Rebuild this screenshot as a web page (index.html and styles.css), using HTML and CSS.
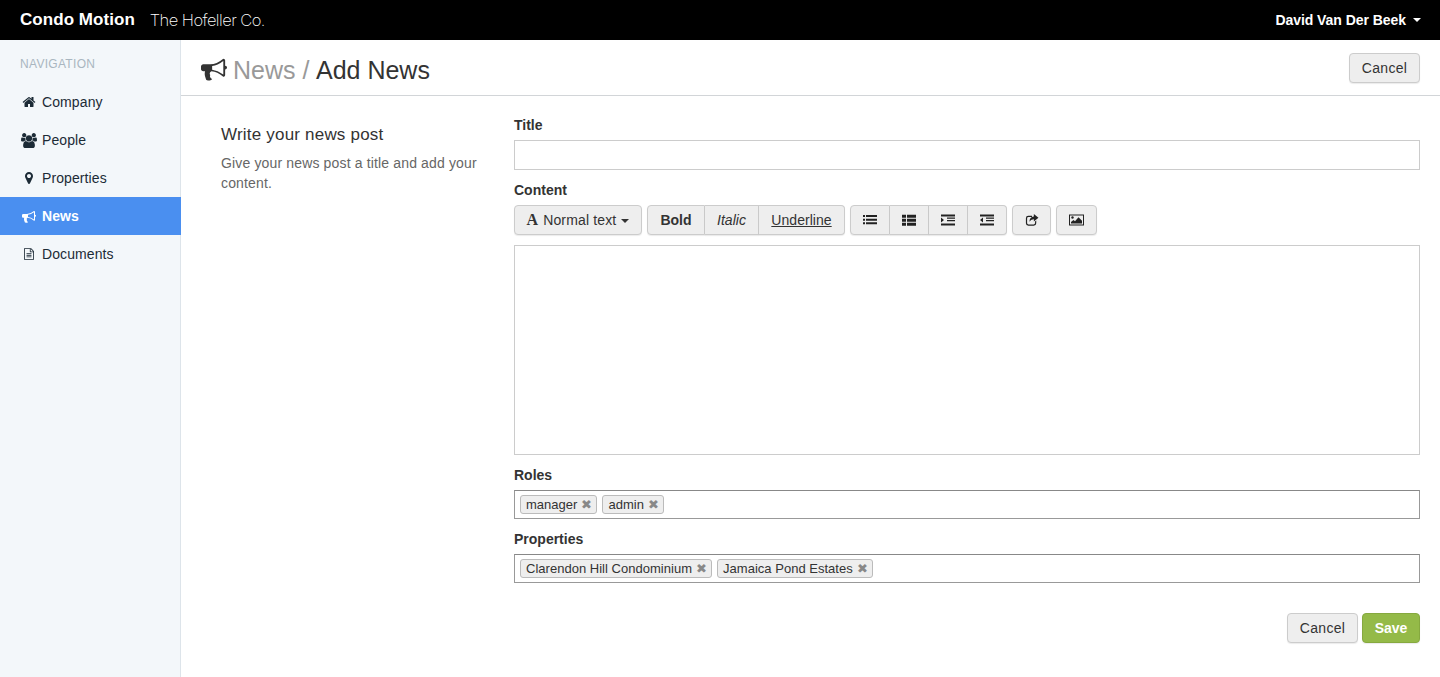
FILE: index.html
```html
<!DOCTYPE html>
<html lang="en">
<head>
<meta charset="utf-8">
<title>Add News</title>
<link rel="stylesheet" href="styles.css">
</head>
<body>
<svg class="defs" width="0" height="0" aria-hidden="true">
  <symbol id="i-home" viewBox="0 0 1792 1792"><path d="M1472 992v480q0 26-19 45t-45 19h-384v-384H768v384H384q-26 0-45-19t-19-45V992q0-1 .5-3t.5-3l575-474 575 474q1 2 1 6zm223-69l-62 74q-8 9-21 11h-3q-13 0-21-7L896 424l-692 577q-12 8-24 7-13-2-21-11l-62-74q-8-10-7-23.500t11-21.500l719-599q32-26 76-26t76 26l244 204V288q0-14 9-23t23-9h192q14 0 23 9t9 23v408l219 182q10 8 11 21.500t-7 23.500z"/></symbol>
  <symbol id="i-users" viewBox="0 0 1920 1792"><path d="M593 896q-162 5-265 128H194q-82 0-138-40.500T0 865q0-353 124-353 6 0 43.500 21t97.500 42.500T384 597q67 0 133-23-5 37-5 66 0 139 81 256zm1071 637q0 120-73 189.500t-194 69.500H523q-121 0-194-69.500T256 1533q0-53 3.500-103.500t14-109T300 1212t43-97.500 62-81 85.500-53.500T602 960q10 0 43 21.500t73 48 107 48 135 21.500 135-21.500 107-48 73-48 43-21.500q61 0 111.500 20t85.500 53.500 62 81 43 97.500 26.500 108.500 14 109 3.500 103.500zM640 256q0 106-75 181t-181 75-181-75-75-181 75-181 181-75 181 75 75 181zm704 384q0 159-112.500 271.500T960 1024 688.500 911.500 576 640t112.500-271.500T960 256t271.500 112.500T1344 640zm576 225q0 78-56 118.500t-138 40.500h-134q-103-123-265-128 81-117 81-256 0-29-5-66 66 23 133 23 59 0 119-21.500t97.500-42.500 43.500-21q124 0 124 353zm-128-609q0 106-75 181t-181 75-181-75-75-181 75-181 181-75 181 75 75 181z"/></symbol>
  <symbol id="i-marker" viewBox="0 0 1024 1792"><path d="M768 640q0-106-75-181t-181-75-181 75-75 181 75 181 181 75 181-75 75-181zm256 0q0 109-33 179l-364 774q-16 33-47.500 52t-67.500 19-67.500-19-46.500-52L33 819Q0 749 0 640q0-212 150-362t362-150 362 150 150 362z"/></symbol>
  <symbol id="i-horn" viewBox="0 0 1792 1792"><path d="M1664 736q53 0 90.500 37.500T1792 864t-37.500 90.500T1664 992v384q0 52-38 90t-90 38q-417-347-812-380-58 19-91 66t-31 100.500 40 92.500q-20 33-23 65.500t6 58 33.500 55 48 50 61.500 50.500q-29 58-111.500 83t-168.500 11.500-132-55.500q-7-23-29.500-87.500t-32-94.500-23-89-15-101 3.500-98.500 22-110.500H160q-66 0-113-47t-47-113V800q0-66 47-113t113-47h480q435 0 896-384 52 0 90 38t38 90v384zm-128 604V407q-394 302-768 343v270q377 42 768 320z"/></symbol>
  <symbol id="i-file" viewBox="128 0 1536 1792"><path d="M1596 380q28 28 48 76t20 88v1152q0 40-28 68t-68 28H224q-40 0-68-28t-28-68V96q0-40 28-68t68-28h896q40 0 88 20t76 48zm-444-244v376h376q-10-29-22-41l-313-313q-12-12-41-22zm384 1528V640H1120q-40 0-68-28t-28-68V128H256v1536h1280zM512 800q0-14 9-23t23-9h704q14 0 23 9t9 23v64q0 14-9 23t-23 9H544q-14 0-23-9t-9-23v-64zm736 224q14 0 23 9t9 23v64q0 14-9 23t-23 9H544q-14 0-23-9t-9-23v-64q0-14 9-23t23-9h704zm0 256q14 0 23 9t9 23v64q0 14-9 23t-23 9H544q-14 0-23-9t-9-23v-64q0-14 9-23t23-9h704z"/></symbol>
  <symbol id="i-ul" viewBox="0 0 14 12"><path d="M0 1h2v2H0zM3 1h11v2H3zM0 4.700h2v2H0zM3 4.700h11v2H3zM0 8.300h2v2H0zM3 8.300h11v2H3z"/></symbol>
  <symbol id="i-ol" viewBox="0 0 14 12"><path d="M0 .8h4v3H0zM5 .8h9v3H5zM0 4.800h4v3H0zM5 4.800h9v3H5zM0 8.800h4v3H0zM5 8.800h9v3H5z"/></symbol>
  <symbol id="i-indent" viewBox="0 0 14 12"><path d="M0 .5h14v2H0zM6 3.500h8v1.300H6zM6 6h8v1.300H6zM0 9.500h14v2H0zM0 3.500l3 2.500-3 2.500z"/></symbol>
  <symbol id="i-outdent" viewBox="0 0 14 12"><path d="M0 .5h14v2H0zM6 3.500h8v1.300H6zM6 6h8v1.300H6zM0 9.500h14v2H0zM3 3.500L0 6l3 2.500z"/></symbol>
  <symbol id="i-share" viewBox="0 0 14 13"><path d="M3 2h4v1.300H3.200Q1.700 3.300 1.700 4.800v5q0 1.500 1.500 1.500h5.600q1.500 0 1.500-1.500V8l1.300-1v3q0 2.700-2.700 2.700H3Q.4 12.700.4 10V4.700Q.4 2 3 2z"/><path d="M9 0l5 4-5 4V5.600Q5.500 5.400 4.300 8.500 4 3.200 9 2.600z"/></symbol>
  <symbol id="i-picture" viewBox="0 0 15 12"><path fill-rule="evenodd" d="M0 .5h15v11H0zM1 1.500v9h13v-9z"/><path d="M2 9.500v-1.500l2.500-2 1.500 1.200 3.500-4 3.500 3.500v2.800z"/><circle cx="3.500" cy="3.500" r="1.200"/></symbol>
</svg>

<header class="topbar">
  <div class="brand">
    <span class="brand-name">Condo Motion</span>
    <span class="brand-client">The Hofeller Co.</span>
  </div>
  <div class="user">David Van Der Beek <span class="caret caret-user"></span></div>
</header>

<div class="shell">
  <nav class="sidebar">
    <div class="nav-label">NAVIGATION</div>
    <a class="nav-item"><span class="nav-icon"><svg class="ic-home"><use href="#i-home"/></svg></span>Company</a>
    <a class="nav-item"><span class="nav-icon"><svg class="ic-users"><use href="#i-users"/></svg></span>People</a>
    <a class="nav-item"><span class="nav-icon"><svg class="ic-marker"><use href="#i-marker"/></svg></span>Properties</a>
    <a class="nav-item active"><span class="nav-icon"><svg class="ic-home"><use href="#i-horn"/></svg></span>News</a>
    <a class="nav-item"><span class="nav-icon"><svg class="ic-file"><use href="#i-file"/></svg></span>Documents</a>
  </nav>

  <main class="main">
    <div class="page-head">
      <h1 class="page-title"><svg class="ic-title"><use href="#i-horn"/></svg><span class="crumb">News /</span> Add News</h1>
      <button class="btn btn-cancel" type="button">Cancel</button>
    </div>

    <div class="columns">
      <aside class="intro">
        <h2 class="intro-title">Write your news post</h2>
        <p class="intro-text">Give your news post a title and add your content.</p>
      </aside>

      <form class="form">
        <label class="field-label">Title</label>
        <div class="input"></div>

        <label class="field-label label-content">Content</label>
        <div class="toolbar">
          <div class="group"><button class="btn tool tool-style" type="button"><span class="font-a">A</span> Normal text <span class="caret caret-dark"></span></button></div>
          <div class="group">
            <button class="btn tool tool-bold" type="button">Bold</button>
            <button class="btn tool tool-italic" type="button">Italic</button>
            <button class="btn tool tool-under" type="button">Underline</button>
          </div>
          <div class="group">
            <button class="btn tool tool-icon tool-lead" type="button"><svg class="ic-tool"><use href="#i-ul"/></svg></button>
            <button class="btn tool tool-icon" type="button"><svg class="ic-tool"><use href="#i-ol"/></svg></button>
            <button class="btn tool tool-icon" type="button"><svg class="ic-tool"><use href="#i-indent"/></svg></button>
            <button class="btn tool tool-icon" type="button"><svg class="ic-tool"><use href="#i-outdent"/></svg></button>
          </div>
          <div class="group"><button class="btn tool tool-icon" type="button"><svg class="ic-tool"><use href="#i-share"/></svg></button></div>
          <div class="group"><button class="btn tool tool-pic" type="button"><svg class="ic-pic"><use href="#i-picture"/></svg></button></div>
        </div>
        <div class="editor"></div>

        <label class="field-label label-roles">Roles</label>
        <div class="tags">
          <span class="tag">manager<span class="tag-x">✖</span></span>
          <span class="tag">admin<span class="tag-x">✖</span></span>
        </div>

        <label class="field-label label-props">Properties</label>
        <div class="tags">
          <span class="tag">Clarendon Hill Condominium<span class="tag-x">✖</span></span>
          <span class="tag">Jamaica Pond Estates<span class="tag-x">✖</span></span>
        </div>

        <div class="actions">
          <button class="btn btn-cancel" type="button">Cancel</button>
          <button class="btn btn-save" type="button">Save</button>
        </div>
      </form>
    </div>
  </main>
</div>
</body>
</html>
```

FILE: styles.css
```css
* { box-sizing: border-box; }
html, body { margin: 0; height: 677px; overflow: hidden; }
body { font-family: "Liberation Sans", Arial, sans-serif; font-size: 14px; line-height: 20px; color: #333; background: #fff; }
.defs { display: block; height: 0; }

.topbar { height: 40px; background: #000; color: #fff; display: flex; align-items: center; justify-content: space-between; padding: 0 19px 0 20px; }
.brand { display: flex; align-items: center; }
.brand-name { font-size: 17px; font-weight: 700; letter-spacing: 0.05px; }
.brand-client { margin-left: 15px; font-family: Inter, sans-serif; font-weight: 200; font-size: 16.5px; letter-spacing: -0.55px; }
.user { font-size: 14px; font-weight: 700; letter-spacing: -0.05px; display: flex; align-items: center; }
.caret { display: inline-block; width: 0; height: 0; border-left: 4px solid transparent; border-right: 4px solid transparent; }
.caret-user { border-top: 4px solid #fff; margin-left: 7px; }
.caret-dark { border-top: 4px solid #333; margin-left: 1px; vertical-align: 2px; }

.shell { display: flex; height: 637px; }
.sidebar { width: 181px; flex: none; background: #f3f7fa; border-right: 1px solid #dde4ea; padding-top: 15px; color: #1c2b36; }
.nav-label { height: 28px; padding-left: 20px; font-size: 12px; line-height: 18px; color: #a9b6c0; letter-spacing: 0.3px; }
.nav-item { display: flex; align-items: center; height: 38px; color: #1c2b36; letter-spacing: 0.1px; margin-right: -1px; }
.nav-item.active { background: #4a8ff0; color: #fff; font-weight: 700; }
.nav-icon { width: 42px; flex: none; display: flex; justify-content: center; padding-left: 15px; fill: currentColor; }
.nav-icon svg { display: block; }
.ic-home { width: 14px; height: 14px; }
.ic-users { width: 16px; height: 15px; }
.ic-marker { width: 8px; height: 14px; }
.ic-file { width: 10px; height: 12px; }

.main { flex: 1; min-width: 0; }
.page-head { height: 56px; border-bottom: 1px solid #d2d5d8; display: flex; align-items: center; justify-content: space-between; padding: 0 20px; }
.page-title { margin: 0; font-size: 25px; font-weight: 400; line-height: 30px; color: #333; display: flex; align-items: center; padding-top: 4px; white-space: pre; }
.ic-title { width: 26px; height: 26px; fill: #333; margin-right: 6px; margin-top: -3px; }
.crumb { color: #999; margin-right: 1px; }

.btn { font-family: inherit; font-size: 14px; line-height: 20px; height: 30px; padding: 0 12px; color: #333; background: #eee; border: 1px solid #ccc; border-radius: 4px; box-shadow: 0 1px 1px rgba(0,0,0,.08); cursor: pointer; }
.btn-cancel { width: 71px; padding: 0; letter-spacing: 0.3px; }
.btn-save { width: 58px; padding: 0; background: #94ba48; border-color: #86a93f; color: #fff; font-weight: 700; }

.columns { display: flex; padding: 19px 20px 0 40px; }
.intro { width: 293px; flex: none; padding-top: 10px; }
.intro-title { margin: 0; font-size: 17px; font-weight: 400; letter-spacing: 0.2px; line-height: 20px; color: #333; }
.intro-text { margin: 8px 0 0; width: 270px; color: #666; letter-spacing: 0.15px; }

.form { flex: 1; min-width: 0; display: flex; flex-direction: column; }
.field-label { font-weight: 700; display: block; height: 20px; margin-bottom: 5px; }
.label-content { margin-top: 10px; margin-bottom: 5px; }
.label-roles, .label-props { margin-top: 10px; }
.input { height: 30px; border: 1px solid #ccc; background: #fff; }
.toolbar { display: flex; gap: 5px; height: 30px; }
.group { display: flex; }
.tool { padding: 0; border-radius: 0; border-left-width: 0; display: block; }
.group .tool:first-child { border-left-width: 1px; border-radius: 4px 0 0 4px; }
.group .tool:last-child { border-radius: 0 4px 4px 0; }
.group .tool:only-child { border-radius: 4px; }
.tool-style { width: 128px; letter-spacing: 0.15px; }
.font-a { font-family: "Liberation Serif", serif; font-weight: 700; font-size: 16px; letter-spacing: 0; margin-right: 1px; }
.tool-bold { width: 58px; font-weight: 700; }
.tool-italic { width: 54px; font-style: italic; }
.tool-under { width: 86px; text-decoration: underline; letter-spacing: 0.05px; }
.tool-icon { width: 39px; }
.tool-lead { width: 40px; }
.tool-pic { width: 41px; }
.ic-tool { width: 14px; height: 12px; display: block; margin: 0 auto; fill: #222; }
.ic-pic { width: 15px; height: 12px; display: block; margin: 0 auto; fill: #222; }
.editor { height: 210px; margin-top: 10px; border: 1px solid #ccc; background: #fff; }
.tags { height: 29px; border: 1px solid #999; border-top-color: #888; background: #fff; padding: 4px 5px; display: flex; gap: 5px; }
.tag { height: 19px; display: flex; align-items: center; padding: 0 4px 0 5px; font-size: 13px; line-height: 17px; letter-spacing: 0.02px; color: #333; background: #eee; border: 1px solid #bbb; border-radius: 3px; }
.tag-x { margin-left: 4px; color: #888; font-size: 13px; line-height: 17px; }
.actions { display: flex; justify-content: flex-end; gap: 4px; margin-top: 30px; }
```
